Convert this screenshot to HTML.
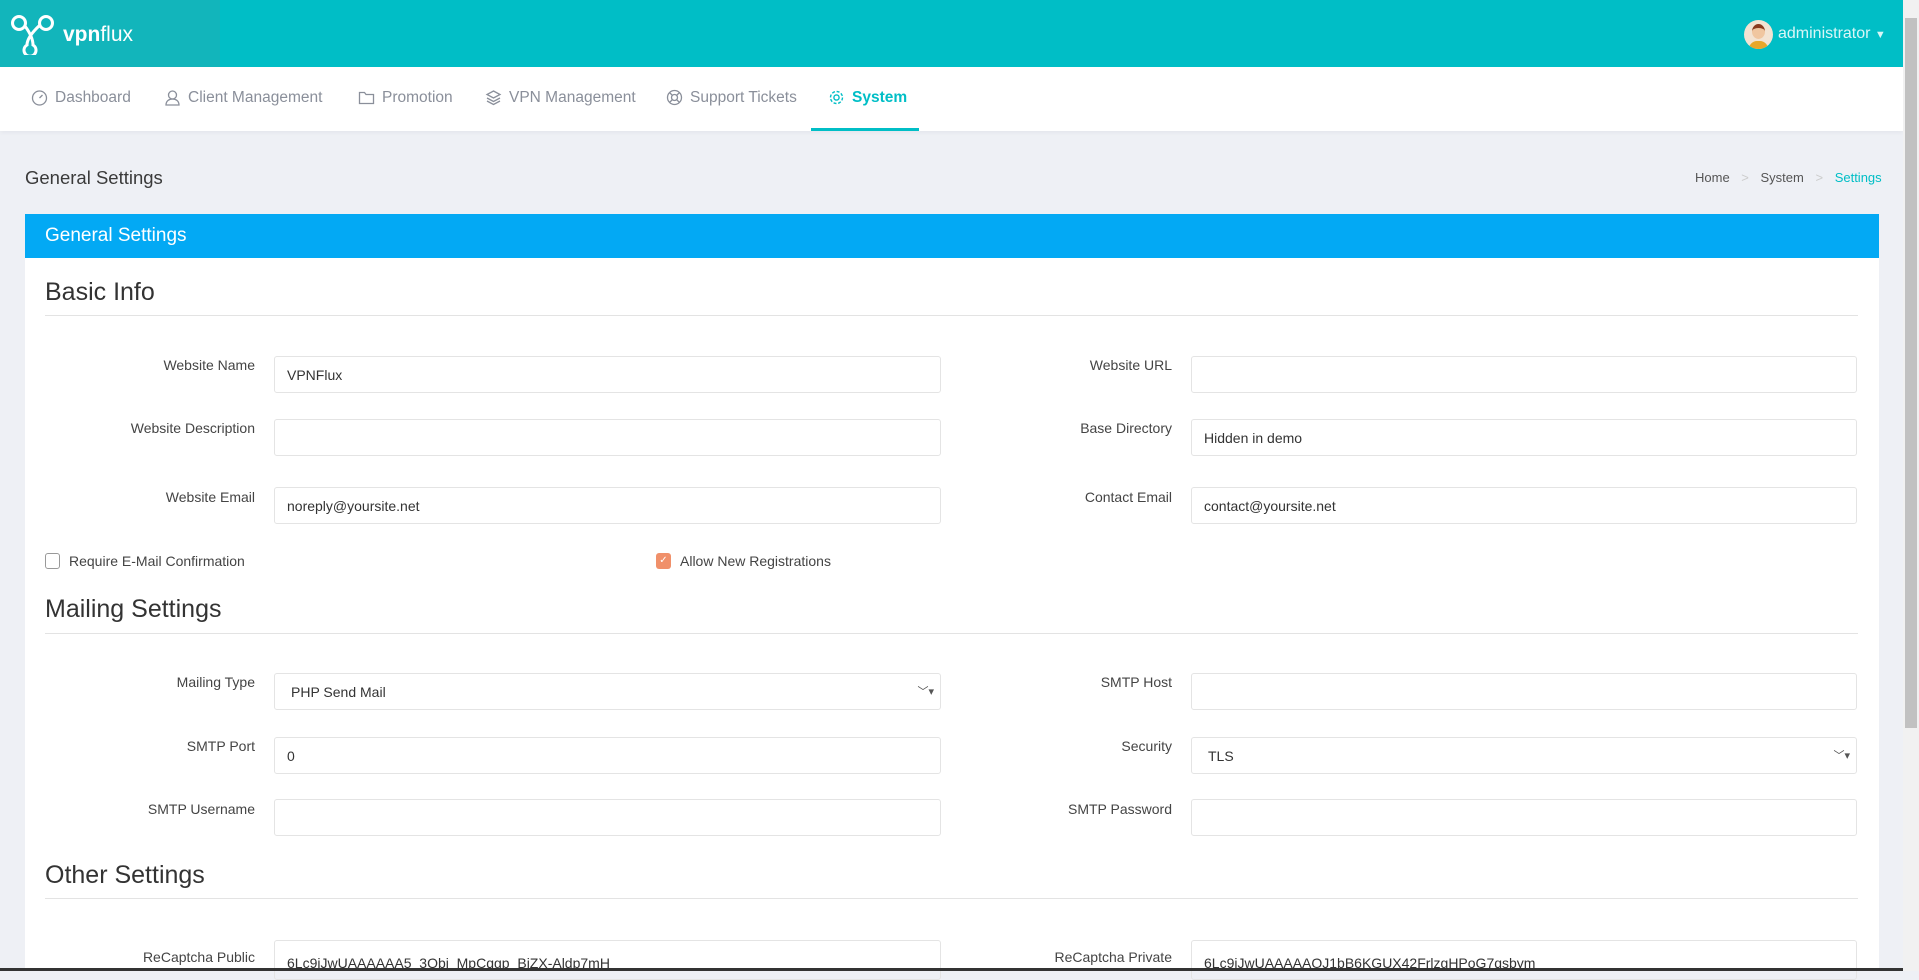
<!DOCTYPE html>
<html><head><meta charset="utf-8"><style>
*{box-sizing:border-box;margin:0;padding:0}
body{width:1919px;height:971px;overflow:hidden;background:#eef0f5;font-family:"Liberation Sans",sans-serif;position:relative;color:#444}
.top{position:absolute;left:0;top:0;width:1903px;height:67px;background:#00bec6}
.logo{position:absolute;left:0;top:0;width:220px;height:67px;background:#12b5bb}
.nav{position:absolute;left:0;top:67px;width:1903px;height:64px;background:#fff;box-shadow:0 2px 4px rgba(0,0,0,.04)}
.ni{position:absolute;top:22px;font-size:15.5px;color:#8a8f9a}
.ni svg{position:absolute;left:-24px;top:0}
.abs{position:absolute}
.card{position:absolute;left:25px;top:214px;width:1854px;height:757px;background:#fff}
.bar{height:44px;background:#03a9f4;color:#fff;font-size:19px;padding:11px 0 0 20px}
h2{position:absolute;left:20px;font-weight:normal;font-size:25px;color:#333}
.hr{position:absolute;left:20px;width:1813px;height:1px;background:#e3e3e3}
.lb{position:absolute;width:230px;text-align:right;font-size:14px;color:#444}
.in{position:absolute;height:37px;border:1px solid #e4e4e4;border-radius:3px;font-size:14px;color:#333;padding:10px 0 0 12px}
.L{left:249px;width:667px}.R{left:1166px;width:666px}
.ll{left:0}.lr{left:917px}
.sb{position:absolute;right:0;top:0;width:16px;height:971px;background:#f1f1f1}
</style></head><body>
<div class="top"></div>
<div class="logo">
<svg class="abs" style="left:10px;top:13px" width="46" height="42" viewBox="0 0 46 42" fill="none" stroke="#fff" stroke-width="3"><circle cx="9" cy="10" r="6.5"/><path d="M15 13 Q23 24 23 32 A6 6 0 1 1 17 32 Q17 24 30 12"/><circle cx="36" cy="10" r="6.5"/></svg>
<div class="abs" style="left:63px;top:23px;color:#fff;font-size:21px"><b>vpn</b>flux</div>
</div>
<div class="abs" style="left:1744px;top:20px;width:29px;height:29px;border-radius:50%;background:#f3e3d2;overflow:hidden"><div style="position:absolute;left:8px;top:4px;width:13px;height:15px;border-radius:50%;background:#f0c6a0;border-top:4px solid #8a3a1c"></div><div style="position:absolute;left:5px;top:21px;width:19px;height:10px;background:#e8a72a;border-radius:8px 8px 0 0"></div></div>
<div class="abs" style="left:1778px;top:25px;color:#d9f6f7;font-size:16px">administrator <span style="font-size:11px">▼</span></div>
<div class="nav">
<div class="ni" style="left:55px"><svg width="17" height="17" viewBox="0 0 17 17" fill="none" stroke="#8a8f9a" stroke-width="1.3"><circle cx="8.5" cy="9" r="7"/><path d="M8.5 9l3-3"/></svg>Dashboard</div>
<div class="ni" style="left:188px"><svg width="17" height="17" viewBox="0 0 17 17" fill="none" stroke="#8a8f9a" stroke-width="1.3"><circle cx="8.5" cy="6" r="4"/><path d="M2 16c0-4 3-6 6.5-6s6.5 2 6.5 6z"/></svg>Client Management</div>
<div class="ni" style="left:382px"><svg width="17" height="17" viewBox="0 0 17 17" fill="none" stroke="#8a8f9a" stroke-width="1.3"><path d="M1.5 3.5h5l1.5 2h7.5v9h-14z"/></svg>Promotion</div>
<div class="ni" style="left:509px"><svg width="17" height="17" viewBox="0 0 17 17" fill="none" stroke="#8a8f9a" stroke-width="1.3"><path d="M8.5 2l6.5 3.5-6.5 3.5-6.5-3.5z M2 9l6.5 3.5L15 9 M2 12l6.5 3.5L15 12"/></svg>VPN Management</div>
<div class="ni" style="left:690px"><svg width="17" height="17" viewBox="0 0 17 17" fill="none" stroke="#8a8f9a" stroke-width="1.3"><circle cx="8.5" cy="8.5" r="7"/><circle cx="8.5" cy="8.5" r="3"/><path d="M3.5 3.5l3 3M13.5 3.5l-3 3M3.5 13.5l3-3M13.5 13.5l-3-3"/></svg>Support Tickets</div>
<div class="ni" style="left:852px;color:#00bec6;font-weight:bold"><svg width="17" height="17" viewBox="0 0 17 17" fill="none" stroke="#00bec6" stroke-width="1.4"><circle cx="8.5" cy="8.5" r="2.6"/><circle cx="8.5" cy="8.5" r="6" stroke-dasharray="3 1.7"/></svg>System</div>
<div class="abs" style="left:811px;top:61px;width:108px;height:3px;background:#00bec6"></div>
</div>
<div class="abs" style="left:25px;top:167px;font-size:18.5px;color:#3a3a3a">General Settings</div>
<div class="abs" style="left:1695px;top:170px;font-size:13px;color:#555">Home <span style="color:#ccc;margin:0 8px">&gt;</span> System <span style="color:#ccc;margin:0 8px">&gt;</span> <span style="color:#00bec6">Settings</span></div>
<div class="card">
<div class="bar">General Settings</div>
<h2 style="top:64px">Basic Info</h2><div class="hr" style="top:101px"></div>
<div class="lb ll" style="top:143px">Website Name</div><div class="in L" style="top:142px">VPNFlux</div>
<div class="lb lr" style="top:143px">Website URL</div><div class="in R" style="top:142px"></div>
<div class="lb ll" style="top:206px">Website Description</div><div class="in L" style="top:205px"></div>
<div class="lb lr" style="top:206px">Base Directory</div><div class="in R" style="top:205px">Hidden in demo</div>
<div class="lb ll" style="top:275px">Website Email</div><div class="in L" style="top:273px">noreply@yoursite.net</div>
<div class="lb lr" style="top:275px">Contact Email</div><div class="in R" style="top:273px">contact@yoursite.net</div>
<div class="abs" style="left:20px;top:339px;width:15px;height:16px;border:1px solid #999;border-radius:3px"></div>
<div class="abs" style="left:44px;top:339px;font-size:14px">Require E-Mail Confirmation</div>
<div class="abs" style="left:631px;top:339px;width:15px;height:16px;background:#f0906a;border-radius:3px;color:#fff;font-size:10px;text-align:center;line-height:16px">✓</div>
<div class="abs" style="left:655px;top:339px;font-size:14px">Allow New Registrations</div>
<h2 style="top:381px">Mailing Settings</h2><div class="hr" style="top:419px"></div>
<div class="lb ll" style="top:460px">Mailing Type</div><div class="in L" style="top:459px;padding-left:16px">PHP Send Mail<span style="position:absolute;right:6px;top:9px;font-size:11px;color:#555">﹀▾</span></div>
<div class="lb lr" style="top:460px">SMTP Host</div><div class="in R" style="top:459px"></div>
<div class="lb ll" style="top:524px">SMTP Port</div><div class="in L" style="top:523px">0</div>
<div class="lb lr" style="top:524px">Security</div><div class="in R" style="top:523px;padding-left:16px">TLS<span style="position:absolute;right:6px;top:9px;font-size:11px;color:#555">﹀▾</span></div>
<div class="lb ll" style="top:587px">SMTP Username</div><div class="in L" style="top:585px"></div>
<div class="lb lr" style="top:587px">SMTP Password</div><div class="in R" style="top:585px"></div>
<h2 style="top:647px">Other Settings</h2><div class="hr" style="top:684px"></div>
<div class="lb ll" style="top:735px">ReCaptcha Public</div><div class="in L" style="top:726px;height:40px;padding-top:14px">6Lc9iJwUAAAAAA5_3Qbj_MpCqgp_BjZX-Aldp7mH</div>
<div class="lb lr" style="top:735px">ReCaptcha Private</div><div class="in R" style="top:726px;height:40px;padding-top:14px">6Lc9iJwUAAAAAOJ1bB6KGUX42FrlzgHPoG7qsbym</div>
</div>
<div class="abs" style="left:0;top:968px;width:1919px;height:3px;background:#333"></div>
<div class="sb"><div style="position:absolute;left:2px;top:18px;width:12px;height:710px;background:#c1c1c1"></div></div>
</body></html>
